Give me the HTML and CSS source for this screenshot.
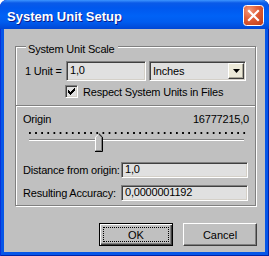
FILE: index.html
```html
<!DOCTYPE html>
<html lang="en">
<head>
<meta charset="UTF-8" />
<title>System Unit Setup</title>
<link rel="stylesheet" href="styles.css">
</head>
<body>

<!-- Dialog window -->
<div class="window">

  <!-- Title bar -->
  <div class="titlebar">
    <span class="title">System Unit Setup</span>
    <button class="closeBtn" aria-label="Close">
      <svg width="21" height="21" viewBox="0 0 21 21">
        <defs>
          <radialGradient id="closeFill" cx="0.3" cy="0.25" r="0.9">
            <stop offset="0" stop-color="#f29a7c"/>
            <stop offset="0.45" stop-color="#e2603a"/>
            <stop offset="1" stop-color="#c3401a"/>
          </radialGradient>
        </defs>
        <rect x="0.5" y="0.5" width="20" height="20" rx="3" fill="url(#closeFill)" stroke="#fff"/>
        <path d="M6 6L15 15M15 6L6 15" stroke="#fff" stroke-width="2.2" stroke-linecap="square"/>
      </svg>
    </button>
  </div>

  <!-- Client area -->
  <div class="client">

    <div class="group">
      <span class="groupCaption">System Unit Scale</span>

      <div class="unitRow">
        <span class="unitLabel">1 Unit =</span>
        <div class="field">1,0</div>
        <div class="combo">
          <span class="comboText">Inches</span>
          <span class="comboBtn">
            <svg width="7" height="4" viewBox="0 0 7 4"><path d="M0 0H7L3.5 4Z" fill="#000"/></svg>
          </span>
        </div>
      </div>

      <div class="checkRow">
        <span class="checkbox">
          <svg width="9" height="9" viewBox="2 2 9 9"><path d="M3 5h1v3H3zM4 6h1v3H4zM5 7h1v3H5zM6 6h1v3H6zM7 5h1v3H7zM8 4h1v3H8zM9 3h1v3H9z" fill="#000"/></svg>
        </span>
        <span>Respect System Units in Files</span>
      </div>

      <div class="sep"></div>

      <div class="originRow">
        <span>Origin</span>
        <span>16777215,0</span>
      </div>

      <div class="slider">
        <div class="ticks"></div>
        <div class="track"></div>
        <svg class="thumb" style="left: 66px" width="8" height="19" viewBox="0 0 8 19">
          <path d="M0 4L3.5 0.5L7 4V18H0Z" fill="#c0c0c0"/>
          <path d="M0.5 18V4.2L3.5 1.2" stroke="#fff" fill="none"/>
          <path d="M3.5 1.2L6.5 4.2V17.5H0.5" stroke="#808080" fill="none"/>
          <path d="M3.8 0.5L7.5 4.2V18.5H0" stroke="#000" fill="none"/>
        </svg>
      </div>

      <div class="fieldRow">
        <span>Distance from origin:</span>
        <div class="field small">1,0</div>
      </div>
      <div class="fieldRow">
        <span>Resulting Accuracy:</span>
        <div class="field small">0,0000001192</div>
      </div>
    </div>

    <div class="buttonRow">
      <button class="btn default">OK</button>
      <button class="btn">Cancel</button>
    </div>

  </div>
</div>

</body>
</html>
```

FILE: styles.css
```css
html, body {
  margin: 0;
  padding: 0;
}

body {
  width: 269px;
  height: 256px;
  overflow: hidden;
  font-family: "Liberation Sans", Arial, sans-serif;
  font-size: 11px;
  letter-spacing: -0.2px;
  color: #000;
  background: #fff;
}

/* Window frame */
.window {
  width: 269px;
  height: 256px;
  box-sizing: border-box;
  display: flex;
  flex-direction: column;
  background: #0656e8;
  border-radius: 7px 7px 0 0;
  box-shadow: inset 1px 0 #0831d9, inset -1px 0 #0024a8, inset 0 -1px #0024a8;
  overflow: hidden;
}

/* Title bar */
.titlebar {
  height: 29px;
  flex: none;
  display: flex;
  align-items: flex-start;
  justify-content: space-between;
  padding: 0 5px 0 7px;
  border-radius: 7px 7px 0 0;
  background: linear-gradient(to bottom, #3d95ff 0, #0a5ae8 3px, #0058ee 8px, #0062f6 16px, #005cef 22px, #0050e0 26px, #0046d4 29px);
}

.title {
  margin-top: 9px;
  font-weight: bold;
  font-size: 13px;
  line-height: 15px;
  letter-spacing: 0;
  color: #fff;
  text-shadow: 1px 1px #0a1a8c;
}

.closeBtn {
  margin-top: 5px;
  width: 21px;
  height: 21px;
  padding: 0;
  border: none;
  background: none;
}

.closeBtn svg {
  display: block;
}

/* Client area */
.client {
  flex: 1;
  margin: 0 4px 4px 4px;
  background: #c0c0c0;
  display: flex;
  flex-direction: column;
}

/* Group box */
.group {
  position: relative;
  margin: 17px 9px 0 11px;
  padding: 14px 6px 4px 7px;
  border: 1px solid #808080;
  box-shadow: 1px 1px 0 #fff, inset 1px 1px 0 #fff;
}

.groupCaption {
  position: absolute;
  top: -4px;
  left: 10px;
  padding: 0 4px 0 2px;
  line-height: 13px;
  background: #c0c0c0;
}

/* Sunken edit field */
.field {
  box-sizing: border-box;
  height: 20px;
  padding: 0 3px;
  line-height: 16px;
  background: #e0e0e0;
  border: 1px solid;
  border-color: #808080 #fff #fff #808080;
  box-shadow: inset 1px 1px #404040, inset -1px -1px #d4d0c8;
  white-space: nowrap;
}

.field.small {
  height: 16px;
  line-height: 13px;
}

.unitRow {
  display: grid;
  grid-template-columns: 43px 80px 100px;
  align-items: center;
}

.unitRow .combo {
  margin-left: 3px;
}

.unitLabel {
  padding-left: 2px;
  white-space: nowrap;
}

/* Combo box */
.combo {
  box-sizing: border-box;
  height: 20px;
  display: flex;
  align-items: center;
  justify-content: space-between;
  padding: 0 1px 0 3px;
  background: #e0e0e0;
  border: 1px solid;
  border-color: #808080 #fff #fff #808080;
  box-shadow: inset 1px 1px #404040, inset -1px -1px #d4d0c8;
}

.comboBtn {
  box-sizing: border-box;
  width: 16px;
  height: 16px;
  display: flex;
  align-items: center;
  justify-content: center;
  background: #ece9d8;
  border: 1px solid;
  border-color: #fff #404040 #404040 #fff;
  box-shadow: inset -1px -1px #aca899;
}

/* Checkbox row */
.checkRow {
  margin: 4px 0 0 42px;
  display: flex;
  align-items: center;
  gap: 5px;
  height: 13px;
  white-space: nowrap;
}

.checkbox {
  box-sizing: border-box;
  width: 13px;
  height: 13px;
  display: flex;
  align-items: center;
  justify-content: center;
  background: #e0e0e0;
  border: 1px solid;
  border-color: #808080 #fff #fff #808080;
  box-shadow: inset 1px 1px #404040, inset -1px -1px #d4d0c8;
}

.checkbox svg {
  display: block;
}

/* Etched separator */
.sep {
  margin: 7px -6px 0 -7px;
  height: 1px;
  background: #808080;
  border-bottom: 1px solid #fff;
}

.originRow {
  margin-top: 6px;
  display: flex;
  justify-content: space-between;
  line-height: 13px;
}

/* Trackbar */
.slider {
  position: relative;
  margin: 1px 0 0 6px;
  width: 217px;
  height: 20px;
}

.ticks {
  margin-top: 6px;
  height: 2px;
  background-image: linear-gradient(to right, #000 2px, transparent 2px);
  background-size: 6.14px 2px;
}

.track {
  margin-top: 5px;
  width: 215px;
  height: 1px;
  background: #808080;
  border-bottom: 1px solid #fff;
}

.thumb {
  position: absolute;
  top: 1px;
}

/* Label + field rows */
.fieldRow {
  margin-top: 7px;
  display: grid;
  grid-template-columns: 98px 127px;
  align-items: center;
  white-space: nowrap;
}

.slider + .fieldRow {
  margin-top: 10px;
}

/* Dialog buttons */
.buttonRow {
  margin-top: 17px;
  padding-right: 8px;
  display: flex;
  justify-content: flex-end;
  gap: 10px;
}

.btn {
  width: 74px;
  height: 23px;
  padding: 0;
  font-family: "Liberation Sans", Arial, sans-serif;
  font-size: 11px;
  color: #000;
  background: #c0c0c0;
  border: 1px solid;
  border-color: #fff #404040 #404040 #fff;
  box-shadow: inset -1px -1px #808080;
}

.btn.default {
  border-color: #000;
  box-shadow: inset 1px 1px #fff, inset -1px -1px #404040, inset -2px -2px #808080;
  outline: 1px dotted #000;
  outline-offset: -5px;
}
```
